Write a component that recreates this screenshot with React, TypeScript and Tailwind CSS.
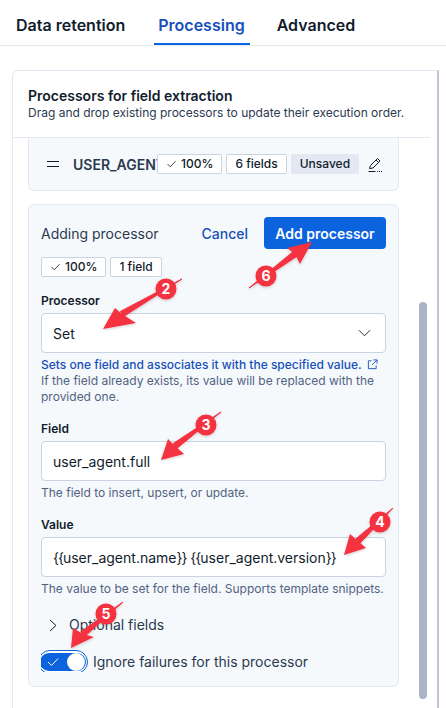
function Check({ className }: { className: string }) {
  return (
    <svg viewBox="0 0 12 10" fill="none" stroke="currentColor" strokeWidth="1" className={className}>
      <path d="M1 5l3.5 3.5L11 1.5" />
    </svg>
  );
}

function Badge({ children, check }: { children: string; check?: boolean }) {
  return (
    <span className="flex h-5 items-center gap-[4px] rounded-[2px] border border-[#cad3e2] bg-white px-2 text-[12px] font-medium leading-none text-[#111c2c]">
      {check && <Check className="h-[8px] w-[11px] text-[#111c2c]" />}
      {children}
    </span>
  );
}

function Label({ children }: { children: string }) {
  return <div className="text-[12px] font-semibold leading-4 text-[#111c2c]">{children}</div>;
}

function Input({ children, chevron }: { children: React.ReactNode; chevron?: boolean }) {
  return (
    <div className="mt-[4px] flex h-10 w-[345px] items-center justify-between rounded-[4px] border border-[#cad3e2] bg-white pl-[11px] pr-[12px] text-[14px] text-[#111c2c]">
      <span>{children}</span>
      {chevron && (
        <svg viewBox="0 0 14 8" fill="none" stroke="#111c2c" strokeWidth="1" className="mr-[2px] h-[8px] w-[13px]">
          <path d="M1 1l6 6 6-6" />
        </svg>
      )}
    </div>
  );
}

function Help({ children }: { children: string }) {
  return <div className="mt-[4px] text-[12px] leading-4 text-[#516381]">{children}</div>;
}

function Brace({ children }: { children: string }) {
  return <span className="tracking-[-1px]">{children}</span>;
}

function Arrow({ tail, tip, w1, w2, neck, badge, n }: { tail: number[]; tip: number[]; w1: number[]; w2: number[]; neck: number[]; badge: number[]; n: string }) {
  const dx = neck[0] - tail[0];
  const dy = neck[1] - tail[1];
  const len = Math.hypot(dx, dy);
  const px = -dy / len;
  const py = dx / len;
  const shaft = `${tail[0]},${tail[1]} ${neck[0] + px * 3},${neck[1] + py * 3} ${neck[0] - px * 3},${neck[1] - py * 3}`;
  return (
    <g>
      <g filter="url(#arrowShadow)">
        <polygon points={shaft} fill="#f5303f" stroke="#f5303f" strokeWidth="1" strokeLinejoin="round" />
        <path d={`M${tip[0]} ${tip[1]}L${w1[0]} ${w1[1]}L${neck[0]} ${neck[1]}L${w2[0]} ${w2[1]}Z`} fill="#f5303f" />
        <circle cx={badge[0]} cy={badge[1]} r="10.5" fill="#f5303f" />
      </g>
      <text x={badge[0]} y={badge[1] + 5} textAnchor="middle" fontSize="14" fontWeight="700" fill="#fff" fontFamily="Inter, sans-serif">
        {n}
      </text>
    </g>
  );
}

export default function App() {
  return (
    <div className="relative h-[708px] w-[446px] overflow-hidden bg-white font-['Inter',sans-serif]">
      <div className="flex h-[46px] items-stretch border-b border-[#e3e8f2] pl-3 text-[16px] font-semibold text-[#111c2c]">
        <div className="flex items-center px-1 pt-[5px]">Data retention</div>
        <div className="relative ml-[25px] flex items-center border-b-2 border-[#0b64dd] pl-[4px] pr-[5px] pt-[7px] text-[#1750ba]">Processing</div>
        <div className="ml-[27px] flex items-center pt-[5px]">Advanced</div>
      </div>

      <div className="ml-3 mt-[24px] h-[700px] w-[427px] rounded-tl-[6px] border-l border-r-2 border-t border-[#e3e8f2] border-r-[#bcc6d6]">
        <div className="mr-[7px] h-[67px] border-b border-[#e3e8f2] pl-[15px] pt-[16px]">
          <div className="text-[14px] font-semibold leading-[18px] text-[#111c2c]">Processors for field extraction</div>
          <div className="text-[12px] leading-4 text-[#2b394f]">Drag and drop existing processors to update their execution order.</div>
        </div>

        <div className="relative ml-[15px] w-[371px]">
          <div className="flex h-[53px] items-center rounded-b-[6px] border border-t-0 border-[#e3e8f2] bg-[#f6f9fc] pl-[18px]">
            <svg viewBox="0 0 12 6" className="h-[6px] w-[12px]" fill="none" stroke="#111c2c" strokeWidth="1">
              <path d="M0 .5h12M0 5.5h12" />
            </svg>
            <div className="ml-[14px] w-[84px] overflow-hidden whitespace-nowrap text-[14px] font-semibold text-[#2b394f]">USER_AGENT</div>
            <div className="flex items-center gap-[4px]">
              <Badge check>100%</Badge>
              <Badge>6 fields</Badge>
              <span className="flex h-5 items-center rounded-[2px] bg-[#e3e8f2] px-[9px] text-[12px] font-medium text-[#111c2c]">Unsaved</span>
            </div>
            <svg viewBox="0 0 14 16" fill="none" stroke="#111c2c" strokeWidth="1" className="ml-[9px] mt-[1px] h-[16px] w-[14px]">
              <path d="M1.5 11.5l1-3L9.5 1.5l2.5 2.5-7 7-3 .5zM8 3l2.5 2.5" />
              <path d="M.5 14.5h7" />
              <path d="M9 14.5h1M11 14.5h1M13 14.5h1" />
            </svg>
          </div>

          <div className="mt-[13px] h-[483px] rounded-[6px] border border-[#e3e8f2] bg-[#f6f9fc] px-3 pt-3">
            <div className="flex items-center justify-between">
              <span className="text-[14px] text-[#2b394f]">Adding processor</span>
              <div className="flex items-center gap-4">
                <span className="text-[14px] font-medium text-[#1750ba]">Cancel</span>
                <span className="flex h-8 w-[122px] items-center justify-center rounded-[4px] bg-[#0b64dd] text-[14px] font-semibold text-white">Add processor</span>
              </div>
            </div>
            <div className="mt-2 flex gap-[4px]">
              <Badge check>100%</Badge>
              <Badge>1 field</Badge>
            </div>

            <div className="mt-[16px]"><Label>Processor</Label></div>
            <Input chevron>Set</Input>
            <div className="mt-[4px] text-[12px] leading-4 text-[#516381]">
              <span className="font-medium text-[#1750ba]">Sets one field and associates it with the specified value.</span>
              <svg viewBox="0 0 12 12" fill="none" stroke="#1750ba" strokeWidth="1" className="ml-[5px] inline-block h-[11px] w-[11px] align-[-1px]">
                <path d="M5 2H1.5v8.5H10V7M7 1h4v4M11 1L5.5 6.5" />
              </svg>
              <br />
              If the field already exists, its value will be replaced with the provided one.
            </div>

            <div className="mt-[16px]"><Label>Field</Label></div>
            <Input>user_agent.full</Input>
            <Help>The field to insert, upsert, or update.</Help>

            <div className="mt-[16px]"><Label>Value</Label></div>
            <Input>
              <Brace>{"{{"}</Brace>user_agent.name<Brace>{"}}"}</Brace> <Brace>{"{{"}</Brace>user_agent.version<Brace>{"}}"}</Brace>
            </Input>
            <Help>The value to be set for the field. Supports template snippets.</Help>

            <div className="mt-[18px] flex items-center pl-[8px] text-[14px] leading-5 text-[#2b394f]">
              <svg viewBox="0 0 8 13" fill="none" stroke="#111c2c" strokeWidth="1" className="h-[13px] w-[8px]">
                <path d="M1 1l6 5.5L1 12" />
              </svg>
              <span className="ml-[12px]">Optional fields</span>
            </div>

            <div className="mt-[15px] flex h-[22px] items-center text-[14px] text-[#2b394f]">
              <div className="h-[22px] w-[47px] overflow-hidden">
                <div className="-ml-[3px] flex h-[24px] w-[50px] items-center rounded-[12px] border-[1.5px] border-[#0b64dd] bg-white p-[1px]">
                  <div className="flex h-[18px] w-full items-center justify-between rounded-[10px] bg-[#0b64dd] pl-[6px] pr-[1px]">
                    <Check className="h-[10px] w-[14px] text-white" />
                    <div className="h-[18px] w-[18px] rounded-full bg-white" />
                  </div>
                </div>
              </div>
              <span className="ml-[5px] mt-[1px]">Ignore failures for this processor</span>
            </div>
          </div>
        </div>
      </div>

      <div className="absolute left-[419px] top-[302px] h-[397px] w-2 rounded-[4px] bg-[#a9b4c5]" />

      <svg className="pointer-events-none absolute left-0 top-0" width="446" height="708">
        <defs>
          <filter id="arrowShadow" x="-30%" y="-30%" width="160%" height="160%">
            <feDropShadow dx="0" dy="1" stdDeviation="1.5" floodColor="#000" floodOpacity="0.2" />
          </filter>
        </defs>
        <Arrow tail={[182, 279]} neck={[122, 314]} tip={[103, 329]} w1={[115, 308]} w2={[136, 323]} badge={[166, 289]} n="2" />
        <Arrow tail={[249, 288]} neck={[295, 254]} tip={[312, 242]} w1={[287, 248]} w2={[300, 264]} badge={[266, 276]} n="6" />
        <Arrow tail={[221, 412]} neck={[175, 446]} tip={[161, 460]} w1={[168, 439]} w2={[184, 454]} badge={[206, 425]} n="3" />
        <Arrow tail={[393, 508]} neck={[358, 541]} tip={[344, 555]} w1={[350, 534]} w2={[366, 548]} badge={[380, 522]} n="4" />
        <Arrow tail={[123, 602]} neck={[83, 634]} tip={[71, 648]} w1={[73, 628]} w2={[94, 637]} badge={[106, 614]} n="5" />
      </svg>
    </div>
  );
}
